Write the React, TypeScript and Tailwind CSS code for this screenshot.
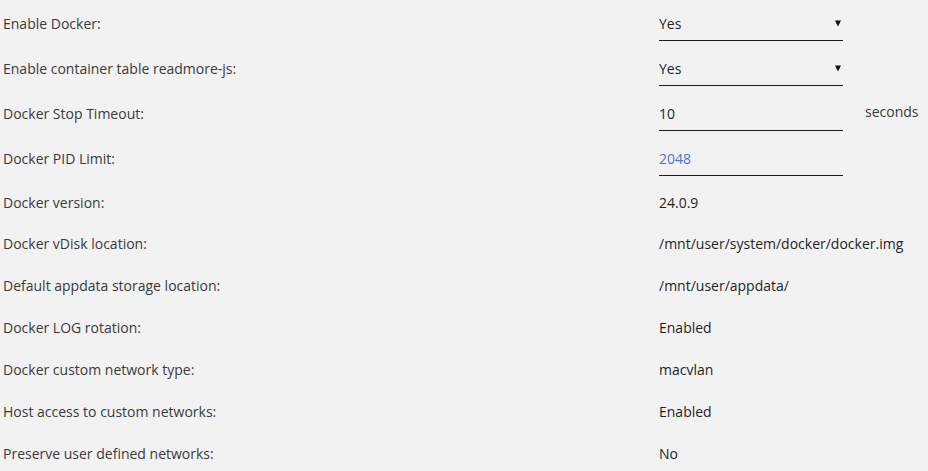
import React from "react";

type Row = {
  label: string;
  kind: "select" | "input" | "text";
  value: string;
  suffix?: string;
  blue?: boolean;
  tall?: boolean;
};

const rows: Row[] = [
  { label: "Enable Docker:", kind: "select", value: "Yes" },
  { label: "Enable container table readmore-js:", kind: "select", value: "Yes" },
  { label: "Docker Stop Timeout:", kind: "input", value: "10", suffix: "seconds" },
  { label: "Docker PID Limit:", kind: "input", value: "2048", blue: true },
  { label: "Docker version:", kind: "text", value: "24.0.9", tall: true },
  { label: "Docker vDisk location:", kind: "text", value: "/mnt/user/system/docker/docker.img" },
  { label: "Default appdata storage location:", kind: "text", value: "/mnt/user/appdata/" },
  { label: "Docker LOG rotation:", kind: "text", value: "Enabled" },
  { label: "Docker custom network type:", kind: "text", value: "macvlan" },
  { label: "Host access to custom networks:", kind: "text", value: "Enabled" },
  { label: "Preserve user defined networks:", kind: "text", value: "No" },
];

function Field({ row }: { row: Row }) {
  if (row.kind === "text") {
    return <span className="text-[#1f1f1f]">{row.value}</span>;
  }
  return (
    <div className="flex items-start">
      <div className="mt-[6px] flex h-[35px] w-[184px] items-center justify-between border-b border-[#1c1c1c] pt-[1px]">
        <span className={row.blue ? "text-[#4a74c8]" : "text-[#1f1f1f]"}>{row.value}</span>
        {row.kind === "select" && (
          <svg width="6" height="7" viewBox="0 0 6 7" className="mr-[2px]">
            <path d="M0 0.5 H6 L3 6.5 Z" fill="#111" />
          </svg>
        )}
      </div>
      {row.suffix && <span className="ml-[22px] mt-[11px] text-[#3a3a3a]">{row.suffix}</span>}
    </div>
  );
}

export default function App() {
  return (
    <div
      className="h-[471px] w-[928px] overflow-hidden bg-[#f2f2f2] text-[14px] text-[#3a3a3a]"
      style={{ fontFamily: '"Open Sans", "Noto Sans", sans-serif' }}
    >
      {rows.map((row) => (
        <div
          key={row.label}
          className={
            row.kind === "text"
              ? row.tall
                ? "flex h-[42px] items-center pt-[3px]"
                : "flex h-[42px] items-center pt-[1px]"
              : "flex h-[45px] items-start"
          }
        >
          <div
            className={
              row.kind === "text"
                ? "w-[659px] shrink-0 pl-[3px]"
                : "mt-[6px] flex h-[35px] w-[659px] shrink-0 items-center pl-[3px]"
            }
          >
            {row.label}
          </div>
          <Field row={row} />
        </div>
      ))}
    </div>
  );
}
